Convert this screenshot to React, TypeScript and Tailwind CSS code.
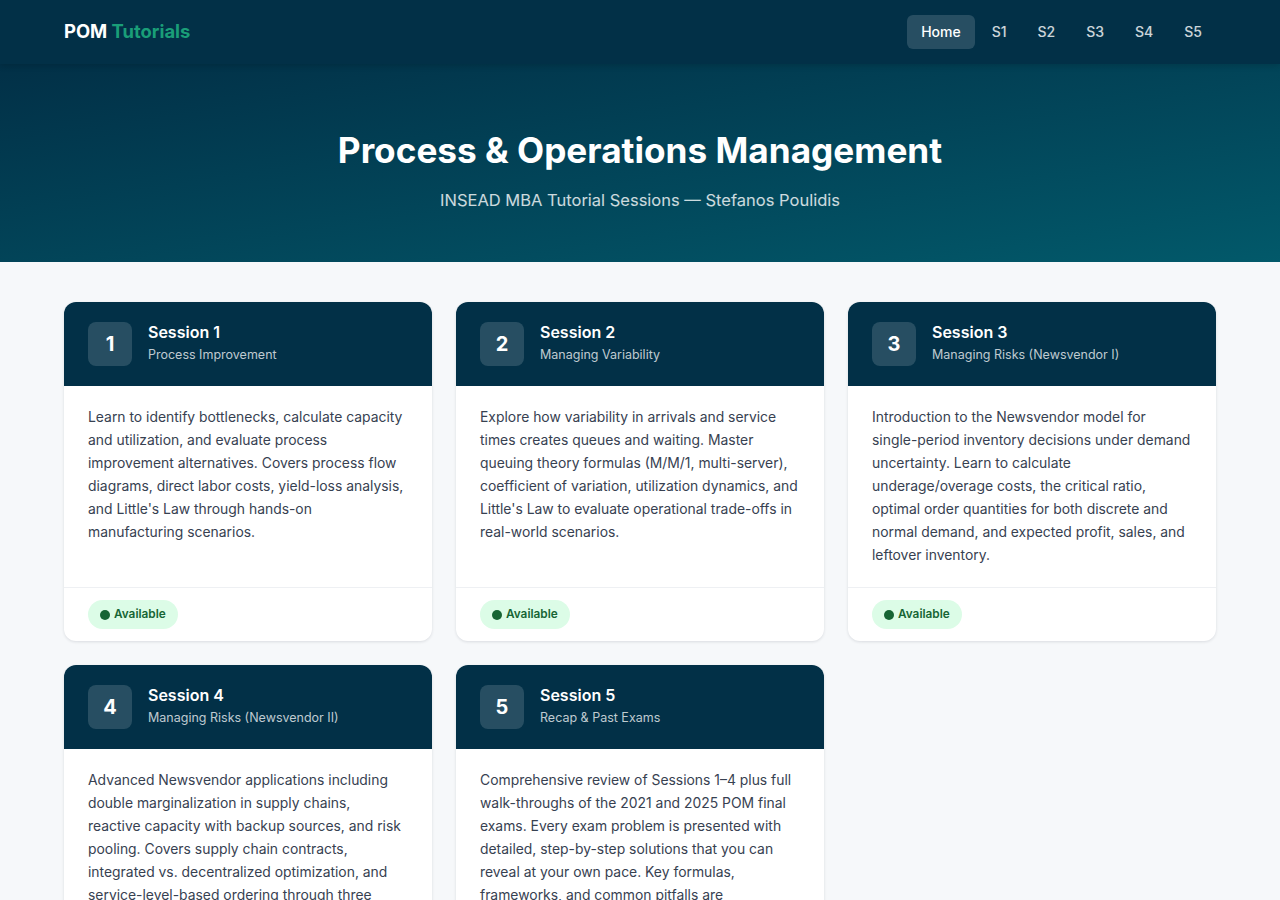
import React from "react";

type Session = {
  n: number;
  title: string;
  subtitle: string;
  body: string;
};

const sessions: Session[] = [
  {
    n: 1,
    title: "Session 1",
    subtitle: "Process Improvement",
    body: "Learn to identify bottlenecks, calculate capacity and utilization, and evaluate process improvement alternatives. Covers process flow diagrams, direct labor costs, yield-loss analysis, and Little's Law through hands-on manufacturing scenarios.",
  },
  {
    n: 2,
    title: "Session 2",
    subtitle: "Managing Variability",
    body: "Explore how variability in arrivals and service times creates queues and waiting. Master queuing theory formulas (M/M/1, multi-server), coefficient of variation, utilization dynamics, and Little's Law to evaluate operational trade-offs in real-world scenarios.",
  },
  {
    n: 3,
    title: "Session 3",
    subtitle: "Managing Risks (Newsvendor I)",
    body: "Introduction to the Newsvendor model for single-period inventory decisions under demand uncertainty. Learn to calculate underage/overage costs, the critical ratio, optimal order quantities for both discrete and normal demand, and expected profit, sales, and leftover inventory.",
  },
  {
    n: 4,
    title: "Session 4",
    subtitle: "Managing Risks (Newsvendor II)",
    body: "Advanced Newsvendor applications including double marginalization in supply chains, reactive capacity with backup sources, and risk pooling. Covers supply chain contracts, integrated vs. decentralized optimization, and service-level-based ordering through three comprehensive case studies.",
  },
  {
    n: 5,
    title: "Session 5",
    subtitle: "Recap & Past Exams",
    body: "Comprehensive review of Sessions 1–4 plus full walk-throughs of the 2021 and 2025 POM final exams. Every exam problem is presented with detailed, step-by-step solutions that you can reveal at your own pace. Key formulas, frameworks, and common pitfalls are highlighted throughout.",
  },
];

function SessionCard({ s }: { s: Session }) {
  return (
    <div className="flex flex-col overflow-hidden rounded-xl bg-white shadow-[0_1px_3px_rgba(15,23,42,0.12)]">
      <div className="flex h-[84px] items-center gap-4 bg-[#023047] px-6">
        <div className="flex h-11 w-11 items-center justify-center rounded-lg bg-white/15 text-xl font-bold text-white">
          {s.n}
        </div>
        <div className="-mt-1">
          <p className="text-base font-semibold leading-5 text-white">{s.title}</p>
          <p className="mt-[5px] text-[12.5px] leading-4 text-white/75">{s.subtitle}</p>
        </div>
      </div>
      <div className="flex-1 py-5 pl-6 pr-[25.5px] text-[13.9px] leading-[23px] text-[#374151]">
        {s.body}
      </div>
      <div className="border-t border-[#eef0f3] px-6 py-3">
        <span className="inline-flex h-[29px] items-center gap-1 rounded-full bg-[#dcfce7] px-3 text-[11.8px] font-semibold text-[#166534]">
          <span className="h-2.5 w-2.5 rounded-full bg-[#166534]" />
          Available
        </span>
      </div>
    </div>
  );
}

export default function App() {
  const links = ["Home", "S1", "S2", "S3", "S4", "S5"];
  return (
    <div className="min-h-screen bg-[#f6f8fa] font-['Inter',sans-serif]">
      <nav className="relative z-10 bg-[#023047] shadow-[0_2px_6px_rgba(0,0,0,0.15)]">
        <div className="mx-auto flex h-16 max-w-[1280px] items-center justify-between px-16">
          <span className="text-[18.4px] font-bold text-white">
            POM <span className="text-[#1a9e78]">Tutorials</span>
          </span>
          <div className="flex items-center gap-[3px]">
            {links.map((l, i) => (
              <a
                key={l}
                className={
                  i === 0
                    ? "rounded-md bg-white/15 px-3.5 py-[7px] text-sm font-medium text-white"
                    : "rounded-md px-3.5 py-[7px] text-sm font-medium text-white/80"
                }
              >
                {l}
              </a>
            ))}
          </div>
        </div>
      </nav>

      <header className="h-[198px] bg-gradient-to-br from-[#023047] to-[#02596a] pt-[64px] text-center">
        <h1 className="text-[35.2px] font-bold leading-[44px] text-white">
          Process &amp; Operations Management
        </h1>
        <p className="mt-[16px] text-[16.5px] leading-6 text-white/80">
          INSEAD MBA Tutorial Sessions — Stefanos Poulidis
        </p>
      </header>

      <main className="mx-auto grid max-w-[1280px] grid-cols-3 gap-6 px-16 py-10">
        {sessions.map((s) => (
          <SessionCard key={s.n} s={s} />
        ))}
      </main>
    </div>
  );
}
